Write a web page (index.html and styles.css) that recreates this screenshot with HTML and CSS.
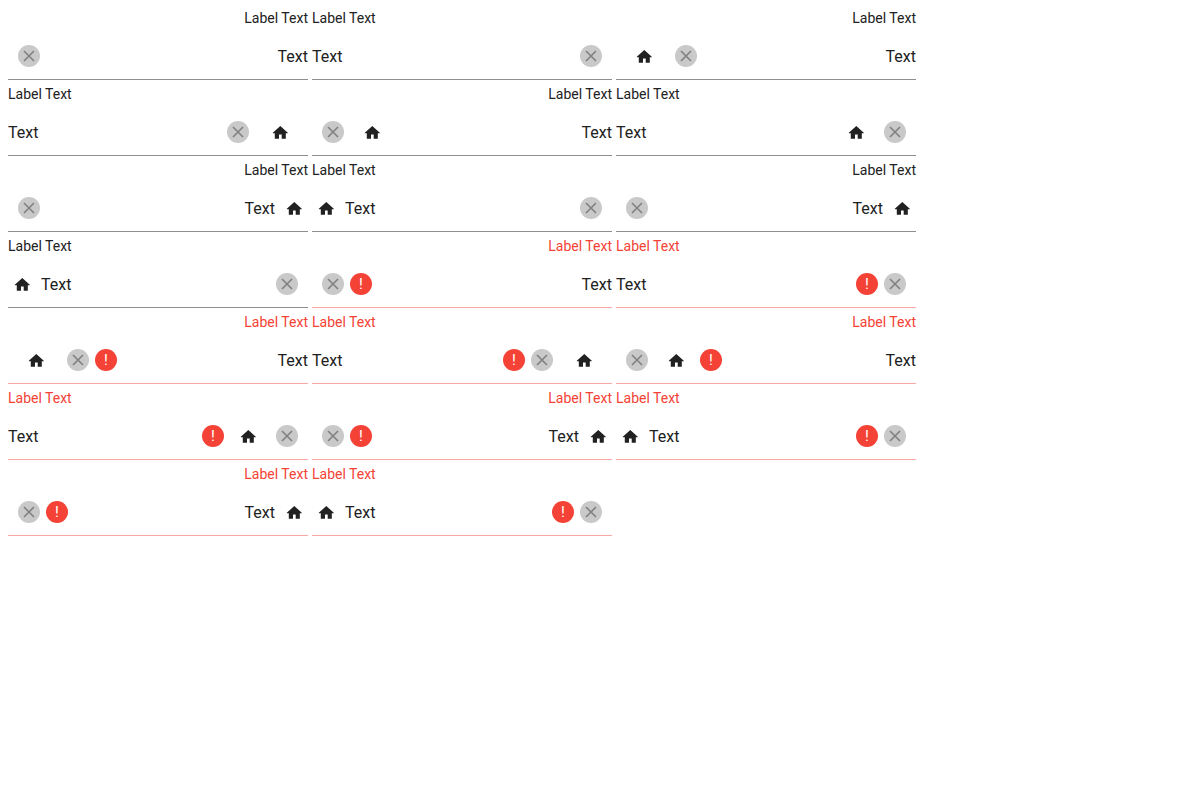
FILE: index.html
```html
<!DOCTYPE html>
<html lang="en">
<head>
<meta charset="utf-8">
<title>Text fields</title>
<link rel="stylesheet" href="styles.css">
</head>
<body>
<svg class="sprite" aria-hidden="true">
  <symbol id="home" viewBox="0 0 18 18"><path d="M9.300 3L1.800 9.800V10.300H3.800V15.800H8V11.600H10.700V15.800H14.800V10.300H16.800V9.800z"/></symbol>
  <symbol id="close" viewBox="0 0 12 12"><path d="M1 1l10 10M11 1L1 11"/></symbol>
</svg>
<main class="fields" id="fields"></main>
<script src="fields.js"></script>
</body>
</html>
```
FILE: styles.css
```css
body {
  margin: 8px;
  background: #fff;
  color: #212121;
  font-family: Roboto, "Liberation Sans", sans-serif;
}

.sprite {
  display: none;
}

.fields {
  display: grid;
  grid-template-columns: repeat(auto-fill, 300px);
  gap: 4px;
}

.label {
  display: block;
  font-size: 14px;
  line-height: 20px;
}

.editor {
  display: flex;
  align-items: center;
  height: 46px;
  padding-top: 5px;
  border-bottom: 1px solid #8f8f8f;
}

.input {
  flex: 1;
  min-width: 0;
  height: 32px;
  padding: 0;
  border: 0;
  outline: 0;
  background: none;
  color: inherit;
  font: 16px Roboto, "Liberation Sans", sans-serif;
}

.actions {
  display: flex;
  align-items: center;
  gap: 6px;
  padding-inline-end: 10px;
}

.button {
  display: flex;
  align-items: center;
  justify-content: center;
  width: 36px;
  height: 36px;
  padding: 0;
  border: 0;
  background: none;
  color: inherit;
  cursor: pointer;
}

.button:not(:last-child) {
  margin-inline-end: 4px;
}

.button.lead {
  width: 28px;
  margin-inline-end: 5px;
}

.home-icon {
  width: 18px;
  height: 18px;
  fill: currentColor;
}

.clear,
.alert {
  display: flex;
  align-items: center;
  justify-content: center;
  width: 22px;
  height: 22px;
  padding: 0;
  border: 0;
  border-radius: 50%;
}

.clear {
  background: #c9c9c9;
  cursor: pointer;
}

.clear:not(:last-child) {
  margin-inline-end: 7px;
}

.clear-icon {
  width: 12px;
  height: 12px;
  fill: none;
  stroke: #808080;
  stroke-width: 1.6;
}

.alert {
  background: #f44336;
  color: #fff;
  font-size: 15px;
  line-height: 22px;
}

.invalid .label {
  color: #f44336;
}

.invalid .editor {
  border-bottom-color: #faa9a3;
}
```
FILE: fields.js
```
const layouts = [
  { actions: ["clear"] },
  { actions: ["clear", "home"] },
  { actions: ["home", "clear"] },
  { lead: true, actions: ["clear"] },
  { lead: true, actions: ["clear"] },
  { invalid: true, actions: ["alert", "clear"] },
  { invalid: true, actions: ["alert", "clear", "home"] },
  { invalid: true, actions: ["alert", "home", "clear"] },
  { invalid: true, lead: true, actions: ["alert", "clear"] },
  { invalid: true, lead: true, actions: ["alert", "clear"] }
];

const homeIcon = '<svg class="home-icon" aria-hidden="true"><use href="#home"/></svg>';

const parts = {
  home: `<button class="button" type="button" aria-label="Home">${homeIcon}</button>`,
  clear: '<button class="clear" type="button" aria-label="Clear"><svg class="clear-icon" aria-hidden="true"><use href="#close"/></svg></button>',
  alert: '<span class="alert">!</span>'
};

const leadButton = `<button class="button lead" type="button" aria-label="Home">${homeIcon}</button>`;

function field(layout, dir, id) {
  return `<div class="field${layout.invalid ? " invalid" : ""}" dir="${dir}">
    <label class="label" for="${id}">Label Text</label>
    <div class="editor">
      ${layout.lead ? leadButton : ""}
      <input class="input" id="${id}" type="text" value="Text">
      <div class="actions">${layout.actions.map(name => parts[name]).join("")}</div>
    </div>
  </div>`;
}

document.getElementById("fields").innerHTML = layouts
  .map((layout, i) => field(layout, "rtl", `field-${i}-rtl`) + field(layout, "ltr", `field-${i}-ltr`))
  .join("");
```
